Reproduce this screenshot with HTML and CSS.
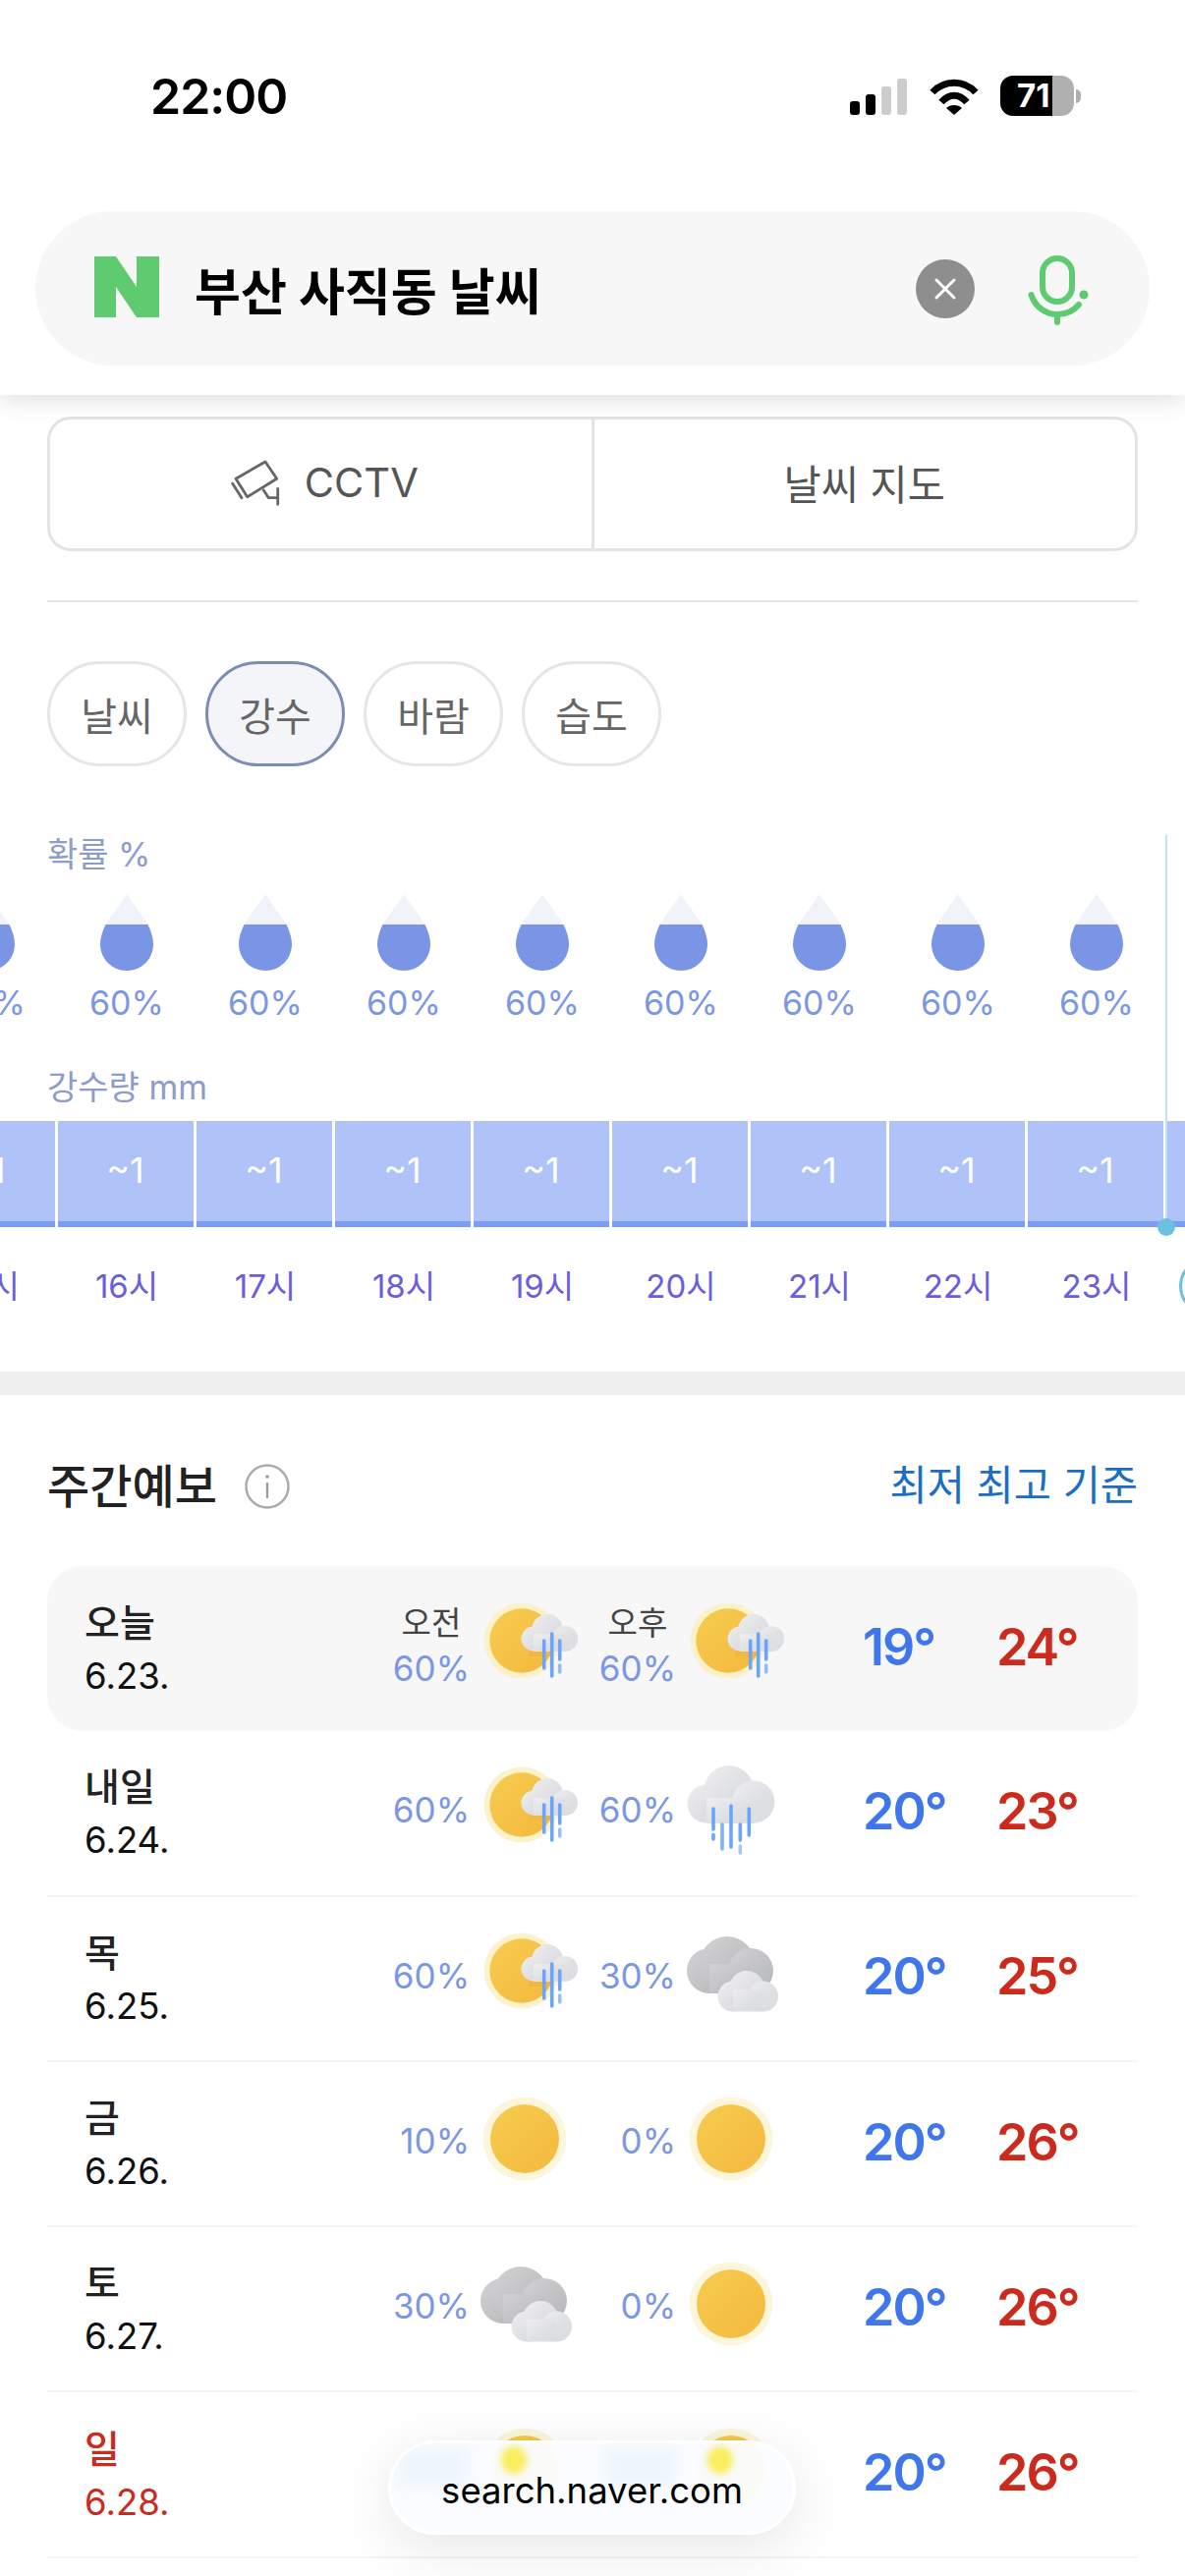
FILE: index.html
```html
<!DOCTYPE html>
<html lang="ko">
<head>
    <meta charset="UTF-8">
    <meta name="viewport" content="width=device-width, initial-scale=1.0">
    <title>부산 사직동 날씨</title>
    <link rel="stylesheet" href="styles.css">
</head>
<body>
    <svg class="defs" width="0" height="0">
        <defs>
            <linearGradient id="sunFill" x1="0" y1="0" x2="1" y2="1">
                <stop offset="0" stop-color="#f6cc4e"/>
                <stop offset="1" stop-color="#f4b93f"/>
            </linearGradient>
            <linearGradient id="cloudFill" x1="0" y1="0" x2="1" y2="1">
                <stop offset="0" stop-color="#eeeeef"/>
                <stop offset="0.6" stop-color="#dedfe3"/>
                <stop offset="1" stop-color="#dcdde1"/>
            </linearGradient>
            <linearGradient id="greyFill" x1="0" y1="0" x2="1" y2="1">
                <stop offset="0" stop-color="#d2d2d4"/>
                <stop offset="1" stop-color="#b5b6b8"/>
            </linearGradient>
            <linearGradient id="dropFill" x1="0" y1="0" x2="0" y2="1">
                <stop offset="0.4" stop-color="#f1f3fb"/>
                <stop offset="0.4" stop-color="#7a95e5"/>
            </linearGradient>
            <symbol id="drop" viewBox="0 0 54 78">
                <path d="M27 0 L6 30 C2 38 0 45 0 51 C0 66 12 78 27 78 C42 78 54 66 54 51 C54 45 52 38 48 30 Z" fill="url(#dropFill)"/>
            </symbol>
            <symbol id="sun" viewBox="0 0 105 110">
                <circle cx="46" cy="50" r="42.5" fill="#fdf6db"/>
                <circle cx="46" cy="50" r="35" fill="url(#sunFill)"/>
            </symbol>
            <symbol id="sunRain" viewBox="0 0 105 110">
                <circle cx="43" cy="47" r="38.5" fill="#fbefbf" opacity="0.8"/>
                <circle cx="43" cy="47" r="32.7" fill="url(#sunFill)"/>
                <rect x="50" y="40" width="26" height="23" fill="#e5a52c" opacity="0.22"/>
                <g fill="url(#cloudFill)">
                    <circle cx="55" cy="45" r="12.5"/>
                    <circle cx="69" cy="36" r="16"/>
                    <circle cx="87" cy="45" r="13"/>
                    <rect x="55" y="40" width="32" height="18"/>
                </g>
                <g stroke="#6aa5fb" stroke-width="3.6" stroke-linecap="round">
                    <path d="M65.7 47 V75"/>
                    <path d="M73.7 40 V83"/>
                    <path d="M81.7 47 V66"/>
                    <path d="M81.7 72 V79" opacity="0.7"/>
                </g>
            </symbol>
            <symbol id="rainCloud" viewBox="0 0 105 110">
                <g fill="url(#cloudFill)">
                    <circle cx="21" cy="46" r="19.5"/>
                    <circle cx="43.7" cy="32" r="25"/>
                    <circle cx="68.7" cy="44" r="21.7"/>
                    <rect x="21" y="40" width="48" height="26"/>
                </g>
                <g stroke="#6aa5fb" stroke-width="3.6" stroke-linecap="round">
                    <path d="M28 51 V72"/>
                    <path d="M28 77.5 V82"/>
                    <path d="M37 67 V92" opacity="0.85"/>
                    <path d="M46 48 V90"/>
                    <path d="M55.3 67 V83"/>
                    <path d="M55.3 89 V96" opacity="0.6"/>
                    <path d="M64.3 51 V78"/>
                </g>
            </symbol>
            <symbol id="clouds" viewBox="0 0 105 110">
                <g fill="url(#greyFill)">
                    <circle cx="24" cy="47" r="23"/>
                    <circle cx="42" cy="40" r="28"/>
                    <circle cx="66" cy="47" r="23"/>
                    <rect x="24" y="40" width="42" height="30"/>
                </g>
                <g fill="url(#cloudFill)">
                    <circle cx="48" cy="73" r="15.5"/>
                    <circle cx="62" cy="65" r="18"/>
                    <circle cx="78.5" cy="73" r="15.5"/>
                    <rect x="48" y="66" width="31" height="22.5"/>
                </g>
            </symbol>
        </defs>
    </svg>

    <header class="top">
        <div class="status">
            <span class="time">22:00</span>
            <div class="status-icons">
                <div class="signal">
                    <i class="s1"></i><i class="s2"></i><i class="s3"></i><i class="s4"></i>
                </div>
                <svg class="wifi" width="50" height="37" viewBox="0 0 50 37">
                    <path d="M3 14 C15 1 35 1 47 14" fill="none" stroke="#000" stroke-width="7"/>
                    <path d="M12 24 C20 15 30 15 38 24" fill="none" stroke="#000" stroke-width="7"/>
                    <path d="M17 30 C21 26 29 26 33 30 L25 37 Z" fill="#000"/>
                </svg>
                <div class="battery"><span>71</span></div>
                <div class="battery-nub"></div>
            </div>
        </div>
        <div class="search">
            <svg class="logo" width="66" height="62" viewBox="0 0 66 62">
                <path d="M0 0 H22 L43 31 V0 H66 V62 H43 L22 31 V62 H0 Z" fill="#5fcb71"/>
            </svg>
            <span class="query">부산 사직동 날씨</span>
            <div class="clear">
                <svg width="24" height="24" viewBox="0 0 24 24">
                    <path d="M3 3 L21 21 M21 3 L3 21" stroke="#fff" stroke-width="3" stroke-linecap="round"/>
                </svg>
            </div>
            <svg class="mic" width="62" height="71" viewBox="0 0 62 71">
                <rect x="15" y="3" width="30" height="44" rx="15" fill="none" stroke="#5fcb71" stroke-width="6"/>
                <path d="M3.5 40 C8 54 20 60 30 60 C40 60 47 56 52 50" fill="none" stroke="#5fcb71" stroke-width="6" stroke-linecap="round"/>
                <path d="M30 60 V68" stroke="#5fcb71" stroke-width="6" stroke-linecap="round"/>
                <circle cx="57" cy="40" r="4.5" fill="#5fcb71"/>
            </svg>
        </div>
    </header>

    <section class="links">
        <div class="link-box">
            <a class="link-item">
                <svg class="cctv" width="52" height="48" viewBox="0 0 52 48" fill="none" stroke="#666" stroke-width="2.8" stroke-linejoin="round" stroke-linecap="round">
                    <path d="M35 3 L5 20.3 L16.7 38.7 L46.7 20.3 Z"/>
                    <path d="M1.7 25.3 L11 39.7"/>
                    <path d="M33.3 32 L38.3 39.7 H47.7 M47.7 30.3 V46.3"/>
                </svg>
                CCTV
            </a>
            <a class="link-item">날씨 지도</a>
        </div>
        <div class="rule"></div>
        <div class="chips">
            <span class="chip">날씨</span>
            <span class="chip active">강수</span>
            <span class="chip">바람</span>
            <span class="chip">습도</span>
        </div>
    </section>

    <section class="chart">
        <div class="now-line"></div>
        <div class="now-dot"></div>
        <div class="chart-label">확률 %</div>
        <div class="cols drops">
            <svg width="54" height="78"><use href="#drop"/></svg>
            <svg width="54" height="78"><use href="#drop"/></svg>
            <svg width="54" height="78"><use href="#drop"/></svg>
            <svg width="54" height="78"><use href="#drop"/></svg>
            <svg width="54" height="78"><use href="#drop"/></svg>
            <svg width="54" height="78"><use href="#drop"/></svg>
            <svg width="54" height="78"><use href="#drop"/></svg>
            <svg width="54" height="78"><use href="#drop"/></svg>
            <svg width="54" height="78"><use href="#drop"/></svg>
        </div>
        <div class="cols percents">
            <span>60%</span><span>60%</span><span>60%</span><span>60%</span><span>60%</span><span>60%</span><span>60%</span><span>60%</span><span>60%</span>
        </div>
        <div class="chart-label second">강수량 mm</div>
        <div class="cols bars">
            <span>~1</span><span>~1</span><span>~1</span><span>~1</span><span>~1</span><span>~1</span><span>~1</span><span>~1</span><span>~1</span><span>~1</span>
        </div>
        <div class="cols hours">
            <span>15시</span><span>16시</span><span>17시</span><span>18시</span><span>19시</span><span>20시</span><span>21시</span><span>22시</span><span>23시</span><span class="next-day">0시</span>
        </div>
    </section>

    <div class="band"></div>

    <section class="week">
        <div class="week-head">
            <h2>주간예보</h2>
            <svg class="info" width="46" height="46" viewBox="0 0 46 46">
                <circle cx="23" cy="23" r="21.5" fill="none" stroke="#aaa" stroke-width="2.4"/>
                <circle cx="23" cy="13" r="1.8" fill="#999"/>
                <path d="M23 19 V35" stroke="#999" stroke-width="2.2"/>
            </svg>
            <span class="basis">최저 최고 기준</span>
        </div>

        <div class="day-row today">
            <div class="day"><b>오늘</b><span>6.23.</span></div>
            <div class="slot">
                <div class="pop"><em>오전</em>60%</div>
                <svg class="wx"><use href="#sunRain"/></svg>
            </div>
            <div class="slot">
                <div class="pop"><em>오후</em>60%</div>
                <svg class="wx"><use href="#sunRain"/></svg>
            </div>
            <div class="low">19°</div>
            <div class="high">24°</div>
        </div>

        <div class="day-row">
            <div class="day"><b>내일</b><span>6.24.</span></div>
            <div class="slot">
                <div class="pop">60%</div>
                <svg class="wx"><use href="#sunRain"/></svg>
            </div>
            <div class="slot">
                <div class="pop">60%</div>
                <svg class="wx"><use href="#rainCloud"/></svg>
            </div>
            <div class="low">20°</div>
            <div class="high">23°</div>
        </div>

        <div class="day-row">
            <div class="day"><b>목</b><span>6.25.</span></div>
            <div class="slot">
                <div class="pop">60%</div>
                <svg class="wx"><use href="#sunRain"/></svg>
            </div>
            <div class="slot">
                <div class="pop">30%</div>
                <svg class="wx"><use href="#clouds"/></svg>
            </div>
            <div class="low">20°</div>
            <div class="high">25°</div>
        </div>

        <div class="day-row">
            <div class="day"><b>금</b><span>6.26.</span></div>
            <div class="slot">
                <div class="pop">10%</div>
                <svg class="wx"><use href="#sun"/></svg>
            </div>
            <div class="slot">
                <div class="pop">0%</div>
                <svg class="wx"><use href="#sun"/></svg>
            </div>
            <div class="low">20°</div>
            <div class="high">26°</div>
        </div>

        <div class="day-row">
            <div class="day"><b>토</b><span>6.27.</span></div>
            <div class="slot">
                <div class="pop">30%</div>
                <svg class="wx"><use href="#clouds"/></svg>
            </div>
            <div class="slot">
                <div class="pop">0%</div>
                <svg class="wx"><use href="#sun"/></svg>
            </div>
            <div class="low">20°</div>
            <div class="high">26°</div>
        </div>

        <div class="day-row sunday">
            <div class="day"><b>일</b><span>6.28.</span></div>
            <div class="slot">
                <svg class="wx"><use href="#sun"/></svg>
            </div>
            <div class="slot">
                <svg class="wx"><use href="#sun"/></svg>
            </div>
            <div class="low">20°</div>
            <div class="high">26°</div>
        </div>
    </section>

    <div class="url-pill">
        <i class="smear smear-a"></i>
        <i class="smear smear-b"></i>
        <i class="glow glow-a"></i>
        <i class="glow glow-b"></i>
        <span>search.naver.com</span>
    </div>
</body>
</html>
```

FILE: styles.css
```css
* {
    box-sizing: border-box;
}

html, body {
    margin: 0;
    padding: 0;
}

body {
    width: 1206px;
    height: 2622px;
    overflow: hidden;
    position: relative;
    background-color: #fff;
    font-family: Inter, "Noto Sans CJK KR", sans-serif;
    color: #222;
}

.defs {
    position: absolute;
}

/* header */
.top {
    height: 402px;
    background-color: #fff;
    box-shadow: 0 6px 24px rgba(0, 0, 0, 0.12);
    position: relative;
    z-index: 2;
}

.status {
    height: 215px;
    padding: 77px 106px 0 153px;
    display: flex;
    justify-content: space-between;
    align-items: flex-start;
}

.time {
    font-size: 50px;
    font-weight: 600;
    line-height: 42px;
    letter-spacing: -1px;
    color: #000;
}

.status-icons {
    display: flex;
    align-items: center;
    height: 41px;
}

.signal {
    display: flex;
    align-items: flex-end;
    gap: 6px;
    height: 37px;
    margin-top: 2px;
}

.signal i {
    display: block;
    width: 10px;
    border-radius: 3px;
    background-color: #000;
}

.signal .s1 { height: 14px; }
.signal .s2 { height: 21px; }
.signal .s3 { height: 29px; background-color: #ccc; }
.signal .s4 { height: 37px; background-color: #ccc; }

.wifi {
    margin: 2px 22px 0 23px;
}

.battery {
    width: 75px;
    height: 41px;
    border-radius: 13px;
    background: linear-gradient(to right, #000 53px, #b0b0b0 53px);
    color: #fff;
    font-size: 33px;
    font-weight: 700;
    line-height: 41px;
    padding-left: 17px;
    overflow: hidden;
}

.battery span {
    display: block;
    width: 36px;
    overflow: hidden;
}

.battery-nub {
    width: 5px;
    height: 14px;
    margin-left: 2px;
    border-radius: 0 7px 7px 0;
    background-color: #b0b0b0;
}

.search {
    height: 157px;
    margin: 0 36px;
    padding: 0 62px 0 60px;
    border-radius: 79px;
    background-color: #f7f7f7;
    display: flex;
    align-items: center;
}

.logo {
    flex: none;
    margin: 0 36px 3px 0;
}

.query {
    flex: 1;
    font-size: 51px;
    font-weight: 700;
    color: #000;
}

.clear {
    width: 60px;
    height: 60px;
    border-radius: 50%;
    background-color: #8e8e8e;
    display: flex;
    align-items: center;
    justify-content: center;
    margin-right: 54px;
}

.mic {
    flex: none;
    margin-top: 3px;
}

/* cctv / map */
.links {
    padding: 22px 48px 0;
}

.link-box {
    display: flex;
    height: 137px;
    border: 3px solid #e4e4e4;
    border-radius: 24px;
}

.link-item {
    flex: 1;
    display: flex;
    align-items: center;
    justify-content: center;
    gap: 23px;
    padding-bottom: 3px;
    font-size: 41.5px;
    color: #555;
}

.cctv {
    margin-left: 8px;
}

.link-item + .link-item {
    border-left: 3px solid #e4e4e4;
}

.rule {
    height: 2px;
    margin-top: 50px;
    background-color: #e5e5e5;
}

.chips {
    display: flex;
    gap: 19px;
    margin-top: 60px;
}

.chip {
    width: 142px;
    height: 107px;
    border: 3px solid #e6e6e6;
    border-radius: 54px;
    display: flex;
    align-items: center;
    justify-content: center;
    font-size: 40px;
    color: #666;
}

.chip.active {
    border-color: #7b8db2;
    background-color: #f3f5f8;
}

/* hourly chart */
.chart {
    position: relative;
    margin-top: 70px;
}

.now-line {
    position: absolute;
    left: 1186px;
    top: 0;
    width: 2px;
    height: 398px;
    background-color: #bfe6ee;
    z-index: 1;
}

.now-dot {
    position: absolute;
    left: 1178px;
    top: 390px;
    width: 18px;
    height: 18px;
    border-radius: 50%;
    background-color: #6cc0e0;
    z-index: 1;
}

.chart-label {
    padding-left: 48px;
    font-size: 34px;
    line-height: 40px;
    color: #8c9ccb;
}

.chart-label.second {
    margin-top: 46px;
}

.cols {
    display: flex;
    margin-left: -82.5px;
}

.cols > * {
    flex: none;
    width: 141px;
    text-align: center;
}

.drops {
    margin-top: 20px;
    height: 78px;
}

.drops svg {
    width: 54px;
    margin: 0 43.5px;
}

.percents {
    margin-top: 13px;
    font-size: 34px;
    line-height: 40px;
    color: #7b97e4;
}

.bars {
    margin-top: 14px;
    width: 1600px;
}

.bars span {
    height: 108px;
    border-right: 3px solid #fff;
    border-bottom: 6px solid #7a9df5;
    background-color: #b0c3f8;
    font-size: 36px;
    line-height: 100px;
    color: #fff;
    position: relative;
}

.bars span::after {
    content: "";
    position: absolute;
    right: -3px;
    bottom: -6px;
    width: 3px;
    height: 6px;
    background-color: #fff;
}

.hours {
    margin-top: 30px;
    width: 1600px;
    font-size: 33px;
    line-height: 60px;
    color: #6b5ce0;
}

.hours .next-day {
    width: 114px;
    margin-left: 13px;
    border: 3px solid #6cc0e0;
    border-radius: 30px;
    line-height: 54px;
}

.band {
    height: 24px;
    margin-top: 57px;
    background-color: #f0f0f0;
}

/* weekly */
.week {
    padding: 63px 48px 0;
}

.week-head {
    display: flex;
    align-items: center;
    height: 60px;
    margin-bottom: 51px;
}

.week-head h2 {
    margin: 0;
    font-size: 47px;
    font-weight: 500;
    line-height: 60px;
    color: #222;
}

.info {
    margin-left: 28px;
}

.basis {
    margin-left: auto;
    margin-top: -8px;
    font-size: 41.5px;
    color: #1a6fc4;
}

.day-row {
    display: flex;
    align-items: center;
    height: 168.3px;
    padding-left: 38px;
    border-bottom: 2px solid #f5f5f5;
}

.day-row.today {
    background-color: #f7f7f7;
    border-bottom: 0;
    border-radius: 36px;
}

.day {
    width: 297px;
    display: flex;
    flex-direction: column;
    padding-top: 2px;
    color: #111;
}

.day b {
    font-size: 39px;
    font-weight: 500;
    line-height: 55px;
    color: #222;
}

.day span {
    font-size: 36.5px;
    line-height: 55px;
}

.sunday .day b,
.sunday .day span {
    color: #cc2a1c;
}

.slot {
    width: 210px;
    display: flex;
    align-items: center;
    justify-content: flex-end;
}

.pop {
    display: flex;
    flex-direction: column;
    align-items: center;
    padding: 0 10px 6px 0;
    font-size: 35px;
    line-height: 46px;
    color: #7b97e4;
}

.pop em {
    font-style: normal;
    font-size: 33px;
    color: #444;
}

.wx {
    flex: none;
    width: 105px;
    height: 110px;
}

.low,
.high {
    font-size: 52px;
    font-weight: 600;
    letter-spacing: -2px;
    padding-bottom: 4px;
}

.low {
    width: 136px;
    margin-left: 75px;
    color: #3f76ec;
}

.high {
    color: #cc2a1c;
}

/* safari url pill */
.url-pill {
    position: absolute;
    left: 395px;
    top: 2484px;
    width: 415px;
    height: 96px;
    z-index: 3;
    border: 3px solid #fff;
    border-radius: 48px;
    background-color: rgba(250, 252, 255, 0.96);
    box-shadow: 0 14px 60px rgba(0, 0, 0, 0.1);
    display: flex;
    align-items: flex-end;
    justify-content: center;
    padding-bottom: 19px;
    overflow: hidden;
}

.url-pill span {
    position: relative;
    font-size: 36.5px;
    line-height: 46px;
    color: #000;
}

.smear {
    position: absolute;
    top: 3px;
    width: 72px;
    height: 42px;
    background-color: #eef6fd;
    filter: blur(6px);
}

.smear-a { left: 6px; }
.smear-b { left: 218px; }

.glow {
    position: absolute;
    top: 3px;
    width: 26px;
    height: 28px;
    border-radius: 50%;
    background-color: #f9ee5f;
    filter: blur(3px);
}

.glow-a { left: 112px; }
.glow-b { left: 322px; }
```
